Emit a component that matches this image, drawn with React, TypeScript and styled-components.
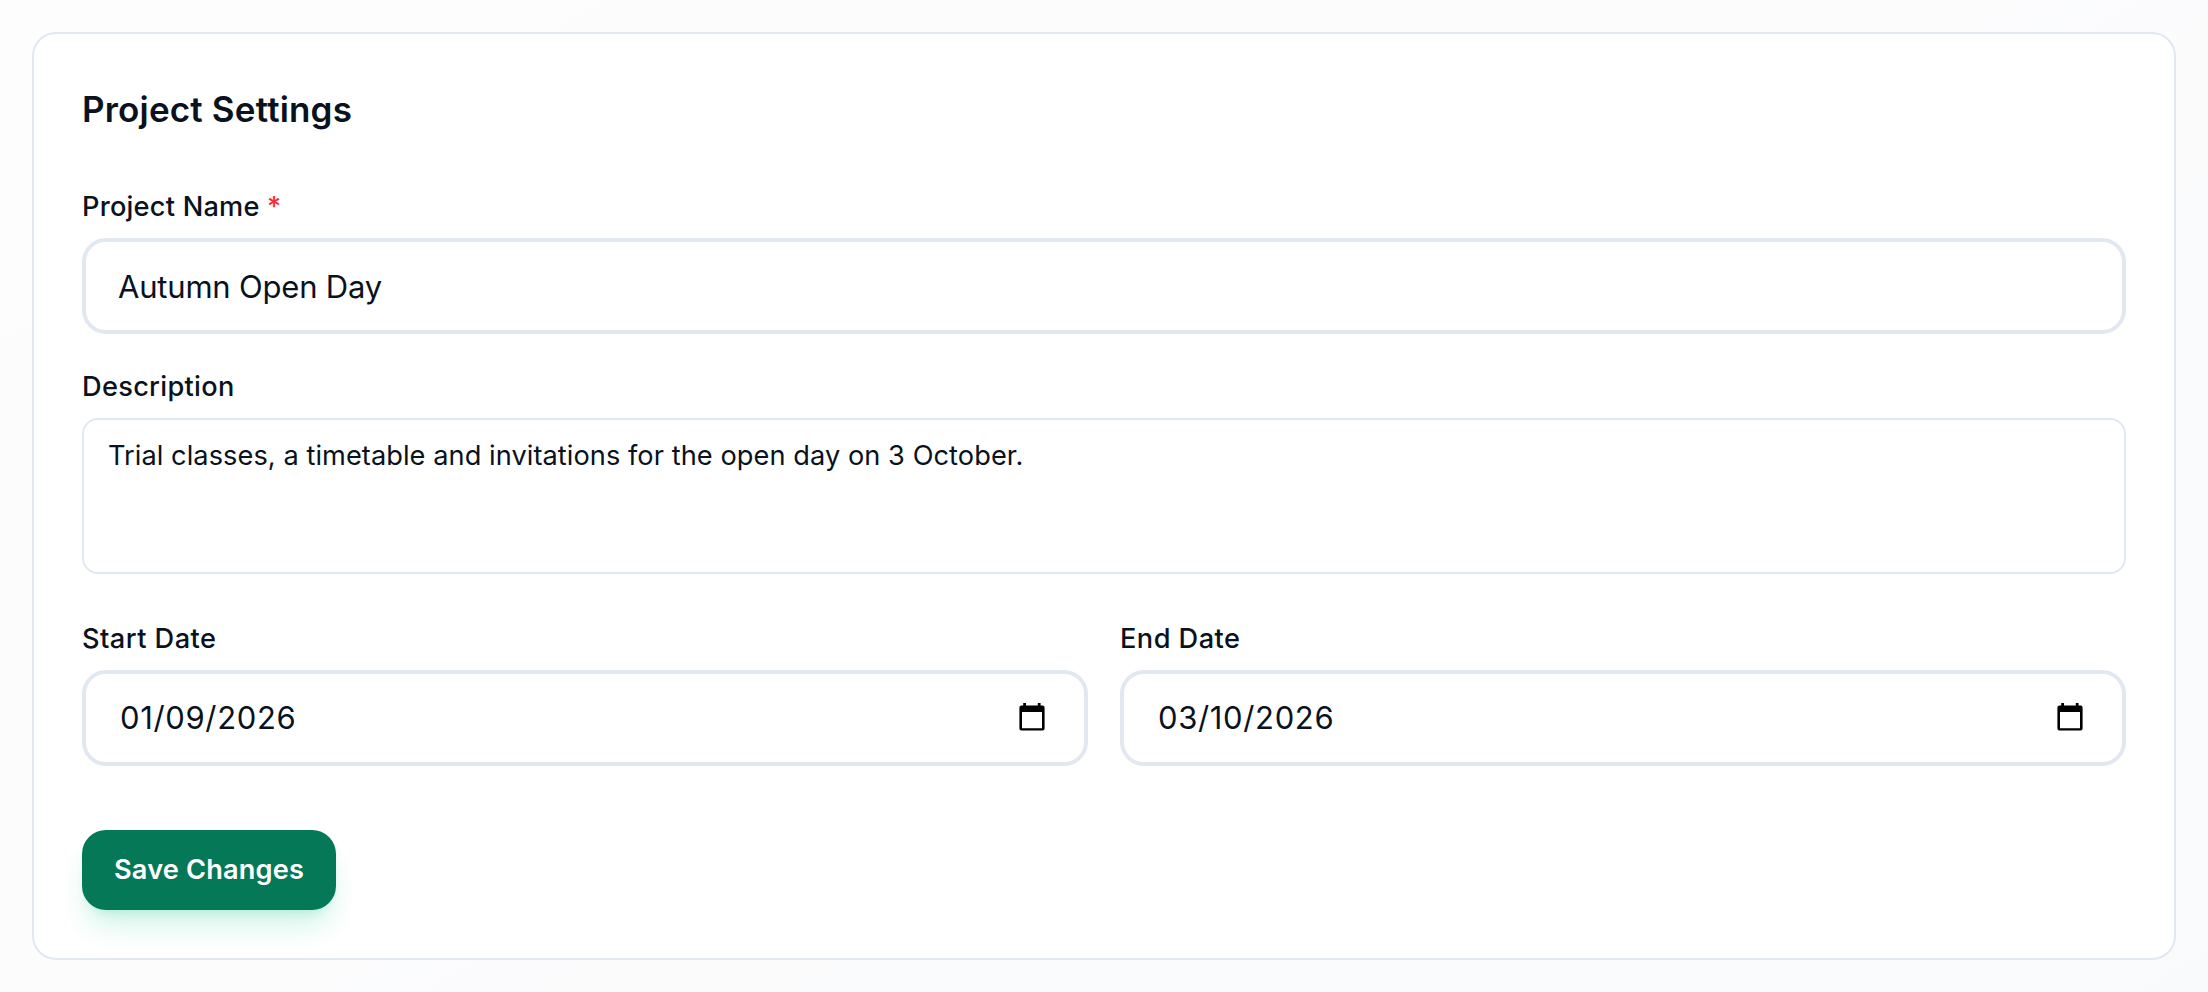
import * as React from 'react'
import styled, { createGlobalStyle } from 'styled-components'

const fontStack = `Inter, 'Liberation Sans', sans-serif`

const GlobalStyle = createGlobalStyle`
    * {
        box-sizing: border-box;
    }

    body {
        margin: 0;
        background: linear-gradient(150deg, #fdfdfd 0%, #fcfcfd 50%, #f8fafc 100%);
        color: #0a1220;
        font-family: ${fontStack};
    }
`

const Page = styled.main`
    height: 992px;
    padding: 32px;
`

const Card = styled.form`
    display: flex;
    flex-direction: column;
    align-items: flex-start;
    height: 928px;
    padding: 48px;
    background: #ffffff;
    border: 2px solid #e2e8f0;
    border-radius: 24px;
`

const Title = styled.h2`
    margin: 0 0 48px;
    font-size: 35px;
    font-weight: 600;
    line-height: 54px;
    padding-bottom: 2px;
    letter-spacing: 0.18px;
`

const Field = styled.div<{ gap?: string }>`
    display: flex;
    flex-direction: column;
    width: 100%;
    margin-bottom: ${props => props.gap || '0'};
`

const Label = styled.label<{ tracking?: string }>`
    margin-bottom: 11px;
    padding-top: 1px;
    font-size: 27.2px;
    font-weight: 500;
    line-height: 40px;
    letter-spacing: ${props => props.tracking || '0.22px'};
`

const Required = styled.span`
    color: #fb2c36;
`

const TextInput = styled.input`
    width: 100%;
    height: 96px;
    padding: 0 32px;
    background: #ffffff;
    border: 4px solid #e2e8f0;
    border-radius: 24px;
    outline: none;
    color: inherit;
    font: 400 31px/48px ${fontStack};
    letter-spacing: -0.2px;
`

const TextArea = styled.textarea`
    display: block;
    width: 100%;
    height: 156px;
    padding: 16px 24px;
    background: #ffffff;
    border: 2px solid #e2e8f0;
    border-radius: 16px;
    outline: none;
    resize: none;
    color: inherit;
    font: 400 27.2px/40px ${fontStack};
    letter-spacing: 0.06px;
`

const DateRow = styled.div`
    display: grid;
    grid-template-columns: 1fr 1fr;
    gap: 32px;
    width: 100%;
    margin-bottom: 64px;
`

const DateBox = styled.div`
    display: flex;
    align-items: center;
    justify-content: space-between;
    height: 96px;
    padding: 0 39px 0 34px;
    border: 4px solid #e2e8f0;
    border-radius: 24px;
    font-size: 31px;
    line-height: 48px;
    letter-spacing: 0.65px;

    svg {
        margin-bottom: 2px;
    }
`

const SaveButton = styled.button`
    width: 254px;
    height: 80px;
    padding: 0;
    background: #047857;
    border: 0;
    border-radius: 24px;
    box-shadow: 0 20px 30px -6px rgba(0, 201, 130, 0.2),
        0 8px 12px -8px rgba(0, 201, 130, 0.25);
    color: #ffffff;
    font: 600 27.2px/40px ${fontStack};
    letter-spacing: 0.15px;
`

const CalendarIcon = () => (
    <svg width="26" height="28" viewBox="0 0 26 28">
        <path
            fillRule="evenodd"
            d="M4.2 0H7v2.6h11.8V0h2.8v2.6h2a2 2 0 0 1 2 2v21a2 2 0 0 1-2 2H2.4a2 2 0 0 1-2-2v-21a2 2 0 0 1 2-2h1.8zM3 9v16.2h20V9z"
        />
    </svg>
)

interface IDateFieldProps {
    label: string
    value: string
}

const DateField: React.FunctionComponent<IDateFieldProps> = props => (
    <Field>
        <Label tracking="0.45px">{props.label}</Label>
        <DateBox>
            <span>{props.value}</span>
            <CalendarIcon />
        </DateBox>
    </Field>
)

const App: React.FunctionComponent = () => {
    return (
        <Page>
            <GlobalStyle />
            <Card>
                <Title>Project Settings</Title>
                <Field gap="32px">
                    <Label htmlFor="name">
                        Project Name <Required>*</Required>
                    </Label>
                    <TextInput id="name" defaultValue="Autumn Open Day" />
                </Field>
                <Field gap="44px">
                    <Label htmlFor="description" tracking="0.3px">
                        Description
                    </Label>
                    <TextArea
                        id="description"
                        spellCheck={false}
                        defaultValue="Trial classes, a timetable and invitations for the open day on 3 October."
                    />
                </Field>
                <DateRow>
                    <DateField label="Start Date" value="01/09/2026" />
                    <DateField label="End Date" value="03/10/2026" />
                </DateRow>
                <SaveButton type="button">Save Changes</SaveButton>
            </Card>
        </Page>
    )
}

export default App
